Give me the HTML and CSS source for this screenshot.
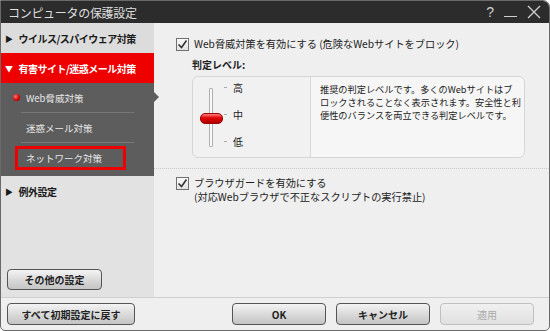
FILE: index.html
```html
<!DOCTYPE html>
<html lang="ja">
<head>
    <meta charset="UTF-8">
    <title>コンピュータの保護設定</title>
    <link rel="stylesheet" href="styles.css">
</head>
<body>
    <div class="window">
        <div class="titlebar">
            <span class="title">コンピュータの保護設定</span>
            <div class="controls">
                <span class="ctl">?</span>
                <span class="ctl min"></span>
                <svg class="ctl close" width="14" height="14" viewBox="0 0 14 14"><path d="M1 1L13 13M13 1L1 13" stroke="#cfcfcf" stroke-width="1.3"/></svg>
            </div>
        </div>

        <div class="main">
            <div class="sidebar">
                <div class="nav-item"><span class="tri">&#9654;</span>ウイルス/スパイウェア対策</div>
                <div class="nav-item active"><span class="tri">&#9660;</span>有害サイト/迷惑メール対策</div>
                <div class="submenu">
                    <div class="sub-item current"><span class="dot"></span>Web脅威対策</div>
                    <div class="sub-item">迷惑メール対策</div>
                    <div class="sub-item last"><span class="boxed">ネットワーク対策</span></div>
                </div>
                <div class="nav-item plain"><span class="tri">&#9654;</span>例外設定</div>
                <div class="side-bottom">
                    <button class="btn other">その他の設定</button>
                </div>
            </div>

            <div class="content">
                <label class="check-row">
                    <span class="checkbox"><svg width="11" height="11" viewBox="0 0 11 11"><path d="M1.5 5.5L4.5 8.5L9.5 1.5" fill="none" stroke="#333" stroke-width="1.6"/></svg></span>
                    <span>Web脅威対策を有効にする (危険なWebサイトをブロック)</span>
                </label>

                <div class="level-title">判定レベル:</div>
                <div class="level-panel">
                    <div class="slider">
                        <div class="track"></div>
                        <div class="thumb"></div>
                        <div class="marks">
                            <div class="mark"><span class="tick"></span>高</div>
                            <div class="mark"><span class="tick"></span>中</div>
                            <div class="mark"><span class="tick"></span>低</div>
                        </div>
                    </div>
                    <div class="level-desc">推奨の判定レベルです。多くのWebサイトはブロックされることなく表示されます。安全性と利便性のバランスを両立できる判定レベルです。</div>
                </div>

                <div class="divider"></div>

                <label class="check-row second">
                    <span class="checkbox"><svg width="11" height="11" viewBox="0 0 11 11"><path d="M1.5 5.5L4.5 8.5L9.5 1.5" fill="none" stroke="#333" stroke-width="1.6"/></svg></span>
                    <span class="two-lines">
                        <span>ブラウザガードを有効にする</span>
                        <span>(対応Webブラウザで不正なスクリプトの実行禁止)</span>
                    </span>
                </label>
            </div>
        </div>

        <div class="footer">
            <button class="btn reset">すべて初期設定に戻す</button>
            <div class="footer-right">
                <button class="btn ok">OK</button>
                <button class="btn cancel">キャンセル</button>
                <button class="btn apply" disabled>適用</button>
            </div>
        </div>
    </div>
</body>
</html>
```

FILE: styles.css
```css
body {
    margin: 0;
    font-family: "Noto Sans CJK JP", "Liberation Sans", sans-serif;
    background-color: #fff;
}

.window {
    width: 548px;
    height: 329px;
    border: 1px solid #6a6a6a;
    border-radius: 0 7px 5px 5px;
    overflow: hidden;
    background-color: #efefef;
    display: flex;
    flex-direction: column;
}

.titlebar {
    height: 22px;
    background-color: #2c2c2c;
    display: flex;
    align-items: center;
    justify-content: space-between;
    padding: 0 8px 0 7px;
    flex-shrink: 0;
}

.title {
    color: #dedede;
    font-size: 12px;
    letter-spacing: -0.3px;
}

.controls {
    display: flex;
    align-items: center;
    gap: 10px;
}

.ctl {
    color: #cfcfcf;
    font-size: 14px;
    font-family: "Liberation Sans", sans-serif;
}

.min {
    width: 13px;
    height: 1px;
    background-color: #cfcfcf;
    margin-top: 9px;
}

.main {
    flex: 1;
    display: flex;
}

.sidebar {
    width: 153px;
    background-color: #e2e2e2;
    display: flex;
    flex-direction: column;
}

.nav-item {
    height: 30px;
    display: flex;
    align-items: center;
    padding-left: 4px;
    font-size: 10px;
    letter-spacing: -0.5px;
    font-weight: bold;
    color: #1a1a1a;
    background-color: #dcdcdc;
    white-space: nowrap;
}

.nav-item.plain {
    background-color: transparent;
}

.nav-item.active {
    background-color: #ee0000;
    color: #fff;
}

.tri {
    font-size: 8px;
    margin-right: 6px;
}

.submenu {
    background-color: #5d5d5d;
    padding-bottom: 4px;
}

.sub-item {
    height: 29px;
    display: flex;
    align-items: center;
    padding-left: 5px;
    margin-left: 20px;
    margin-right: 20px;
    font-size: 9.5px;
    color: #e8e8e8;
    position: relative;
    border-bottom: 1px solid #787878;
    white-space: nowrap;
}

.sub-item.last {
    border-bottom: none;
}

.sub-item.current::after {
    content: "";
    position: absolute;
    right: -25px;
    top: 9px;
    border-top: 5px solid transparent;
    border-bottom: 5px solid transparent;
    border-left: 5px solid #5d5d5d;
}

.dot {
    position: absolute;
    left: -8px;
    width: 7px;
    height: 7px;
    border-radius: 50%;
    background: radial-gradient(circle at 35% 35%, #ff7070, #d00000 60%, #800000);
}

.boxed {
    margin-left: -11px;
    width: 111px;
    height: 24px;
    box-sizing: border-box;
    padding-left: 8px;
    display: flex;
    align-items: center;
    border: 3px solid #ee0000;
}

.side-bottom {
    flex: 1;
    display: flex;
    align-items: flex-end;
    padding: 0 0 7px 6px;
}

.content {
    flex: 1;
    padding: 14px 0 0 15px;
    margin-left: 7px;
}

.check-row {
    display: flex;
    align-items: flex-start;
    gap: 5px;
    font-size: 10.2px;
    color: #222;
    line-height: 13px;
    white-space: nowrap;
}

.two-lines {
    display: flex;
    flex-direction: column;
    gap: 1px;
    line-height: 13px;
}

.checkbox {
    width: 11px;
    height: 11px;
    border: 1px solid #707070;
    background: linear-gradient(#fafafa, #e2e2e2);
    display: flex;
    flex-shrink: 0;
    margin-top: 1px;
}

.level-title {
    font-size: 10px;
    font-weight: bold;
    color: #222;
    margin: 6px 0 4px 16px;
}

.level-panel {
    margin-left: 16px;
    width: 331px;
    height: 80px;
    border: 1px solid #d6d6d6;
    border-radius: 6px;
    background-color: #f1f1f1;
    display: flex;
}

.slider {
    width: 117px;
    border-right: 1px solid #d8d8d8;
    position: relative;
}

.track {
    position: absolute;
    left: 16px;
    top: 11px;
    width: 2px;
    height: 57px;
    border: 1px solid #b0b0b0;
    border-radius: 1px;
    background-color: #fafafa;
}

.thumb {
    position: absolute;
    left: 7px;
    top: 36px;
    width: 21px;
    height: 9px;
    border-radius: 5px;
    background: linear-gradient(#ff8080, #e00000 45%, #b00000);
    border: 1px solid #900;
}

.marks {
    position: absolute;
    left: 31px;
    top: 2px;
    display: flex;
    flex-direction: column;
    gap: 11px;
}

.mark {
    display: flex;
    align-items: center;
    font-size: 10px;
    color: #222;
    height: 16px;
}

.tick {
    width: 3px;
    height: 1px;
    background-color: #aaa;
    margin-right: 6px;
}

.level-desc {
    flex: 1;
    padding: 6px 3px 0 9px;
    font-size: 9.2px;
    line-height: 13px;
    color: #222;
    background-color: #f6f6f6;
    border-radius: 0 6px 6px 0;
}

.divider {
    margin: 10px 0 0 -22px;
    border-top: 1px dotted #c8c8c8;
}

.check-row.second {
    margin-top: 7px;
}

.footer {
    height: 32px;
    border-top: 1px solid #cfcfcf;
    display: flex;
    align-items: center;
    justify-content: space-between;
    padding: 0 15px 0 6px;
    flex-shrink: 0;
}

.footer-right {
    display: flex;
    gap: 10px;
}

.btn {
    font-family: "Noto Sans CJK JP", "Liberation Sans", sans-serif;
    font-size: 10px;
    font-weight: bold;
    color: #222;
    height: 22px;
    border: 1px solid #555;
    border-radius: 4px;
    background: linear-gradient(#f4f4f4, #d8d8d8 55%, #c4c4c4);
    padding: 0;
}

.btn.other {
    width: 95px;
    height: 21px;
}

.btn.reset {
    width: 128px;
}

.btn.ok,
.btn.cancel,
.btn.apply {
    width: 94px;
}

.btn.apply {
    color: #aaa;
    font-weight: normal;
    border-color: #c0c0c0;
    background: linear-gradient(#f0f0f0, #e0e0e0);
}
```
